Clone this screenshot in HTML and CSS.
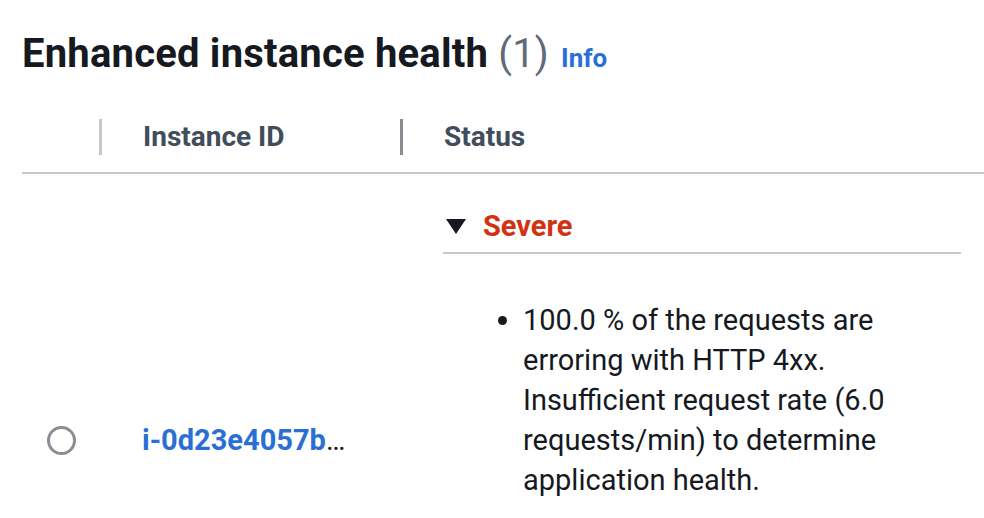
FILE: index.html
```html
<!DOCTYPE html>
<html>
<head>
<meta charset="utf-8">
<link rel="stylesheet" href="styles.css">
</head>
<body>
<div class="panel">
  <h2 class="title">Enhanced instance health <span class="count">(1)</span> <a class="info" href="#">Info</a></h2>
  <div class="table">
    <div class="row head">
      <div class="cell sel"></div>
      <div class="cell th sep-light">Instance ID</div>
      <div class="cell th sep-dark">Status</div>
    </div>
    <div class="row body">
      <div class="cell sel"><span class="radio"></span></div>
      <div class="cell id"><a class="link" href="#">i-0d23e4057b9a1c2f</a></div>
      <div class="cell status">
        <div class="expander">
          <span class="caret"></span>
          <span class="severe">Severe</span>
        </div>
        <ul class="causes">
          <li>100.0 % of the requests are erroring with HTTP 4xx. Insufficient request rate (6.0 requests/min) to determine application health.</li>
        </ul>
      </div>
    </div>
  </div>
</div>
</body>
</html>
```
FILE: styles.css
```css
html, body {
  margin: 0;
  padding: 0;
  background: #ffffff;
}
body {
  font-family: Roboto, "Noto Sans", sans-serif;
  color: #16191f;
  overflow: hidden;
}
.panel {
  padding: 28px 0 0 22px;
}
.title {
  margin: 0;
  font-size: 40px;
  line-height: 52px;
  font-weight: 700;
  color: #16191f;
  letter-spacing: 0.2px;
}
.count {
  font-weight: 400;
  color: #5f6b7a;
}
.info {
  font-size: 26px;
  font-weight: 700;
  color: #2a6fd6;
  text-decoration: none;
  margin-left: 2px;
  letter-spacing: 0;
}
.table {
  margin-top: 16px;
}
.row {
  display: grid;
  grid-template-columns: 77px 301px 1fr;
}
.head {
  border-bottom: 2px solid #c6c6cd;
  height: 74px;
  align-items: start;
  box-sizing: border-box;
}
.th {
  font-size: 28px;
  font-weight: 700;
  color: #414d5c;
  line-height: 36px;
  padding-left: 41px;
  margin-top: 19px;
}
.sep-light { border-left: 3px solid #c6c6cd; }
.sep-dark { border-left: 3px solid #8c8c94; }
.body {
  align-items: center;
}
.sel {
  display: flex;
  align-items: center;
}
.radio {
  width: 23px;
  height: 23px;
  border: 3.5px solid #8c8c94;
  border-radius: 50%;
  margin-left: 25px;
}
.id {
  padding-left: 43px;
  padding-right: 44px;
  font-size: 29px;
  line-height: 40px;
  white-space: nowrap;
  overflow: hidden;
  text-overflow: ellipsis;
  color: #16191f;
}
.link {
  color: #2a6fd6;
  font-weight: 700;
  text-decoration: none;
}
.status {
  padding: 32px 23px 206px 43px;
  font-size: 29px;
  line-height: 40px;
}
.expander {
  display: flex;
  align-items: center;
  gap: 17px;
  padding-bottom: 6px;
  border-bottom: 2px solid #c6c6cd;
}
.caret {
  width: 0;
  height: 0;
  margin-left: 3px;
  border-left: 10px solid transparent;
  border-right: 10px solid transparent;
  border-top: 15px solid #16191f;
}
.severe {
  color: #d13212;
  font-weight: 700;
}
.causes {
  margin: 46px 0 0 0;
  padding-left: 80px;
  color: #16191f;
}
.causes li {
  max-width: 372px;
}
```
